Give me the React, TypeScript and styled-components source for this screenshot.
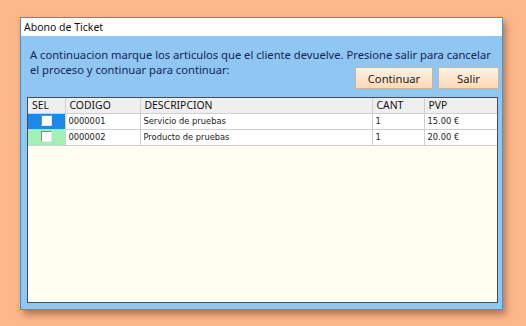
import React from "react";
import styled, { createGlobalStyle } from "styled-components";

const Global = createGlobalStyle`
  html, body { margin: 0; padding: 0; }
  body {
    background: #fdb88a;
    width: 526px;
    height: 326px;
    overflow: hidden;
    font-family: "Noto Sans", "DejaVu Sans", sans-serif;
  }
`;

const Stage = styled.div`
  padding: 17px 0 0 20px;
`;

const Window = styled.div`
  width: 481px;
  height: 291px;
  border: 1px solid #2f9be0;
  background: #90c6f2;
  box-shadow: 3px 5px 7px rgba(120, 70, 40, 0.55);
  display: flex;
  flex-direction: column;
`;

const TitleBar = styled.div`
  height: 18px;
  background: #ffffff;
  display: flex;
  align-items: center;
  padding-left: 3px;
  font-size: 10.5px;
  color: #111;
  flex: none;
`;

const Body = styled.div`
  flex: 1;
  display: flex;
  flex-direction: column;
  padding: 11px 3px 6px 5px;
  min-height: 0;
`;

const Line = styled.div`
  margin-left: 4px;
  font-size: 11.2px;
  line-height: 15px;
  color: #122456;
  white-space: nowrap;
`;

const SecondRow = styled.div`
  display: flex;
  justify-content: space-between;
  align-items: flex-start;
  margin-bottom: 8px;
`;

const Buttons = styled.div`
  display: flex;
  gap: 5px;
  margin-top: 5px;
`;

const Button = styled.button<{ $w: number }>`
  width: ${(p) => p.$w}px;
  height: 22px;
  border: 1px solid #c9b39c;
  background: linear-gradient(#fff2e4, #fcd9b6);
  font-family: "Noto Sans", "DejaVu Sans", sans-serif;
  font-size: 11.2px;
  color: #1b1b1b;
  padding: 0;
`;

const Grid = styled.div`
  flex: 1;
  border: 1px solid #4a4a55;
  background: #fffff1;
  margin: 0 0 0 1px;
  width: 469px;
`;

const Table = styled.table`
  border-collapse: collapse;
  width: 100%;
  table-layout: fixed;
`;

const Th = styled.th<{ $w?: number }>`
  box-sizing: border-box;
  width: ${(p) => (p.$w ? `${p.$w}px` : "auto")};
  height: 15px;
  background: #efefef;
  border-right: 1px solid #cfcfcf;
  border-bottom: 1px solid #cfcfcf;
  font-weight: normal;
  font-size: 10.4px;
  text-align: left;
  padding: 0 0 0 4px;
  color: #111;
  line-height: 14px;
  &:last-child { border-right: none; }
`;

const Td = styled.td<{ $bg?: string }>`
  box-sizing: border-box;
  height: 16px;
  background: ${(p) => p.$bg || "#ffffff"};
  border-right: 1px solid #cfcfcf;
  border-bottom: 1px solid #cfcfcf;
  font-family: "DejaVu Sans", sans-serif;
  font-size: 8.3px;
  color: #222;
  padding: 0 0 0 3px;
  line-height: 15px;
  white-space: nowrap;
  &:last-child { border-right: none; }
`;

const SelCell = styled(Td)`
  padding: 0;
  text-align: center;
`;

const Check = styled.span`
  display: inline-block;
  width: 9px;
  height: 9px;
  background: #fff;
  border: 1px solid #8a8a8a;
  border-right-color: #e8e8e8;
  border-bottom-color: #e8e8e8;
  vertical-align: middle;
  margin-top: -2px;
`;

const rows = [
  { sel: "#1c88e8", code: "0000001", desc: "Servicio de pruebas", cant: "1", pvp: "15.00 €" },
  { sel: "#a4efb4", code: "0000002", desc: "Producto de pruebas", cant: "1", pvp: "20.00 €" },
];

export default function App() {
  return (
    <>
      <Global />
      <Stage>
        <Window>
          <TitleBar>Abono de Ticket</TitleBar>
          <Body>
            <Line>
              A continuacion marque los articulos que el cliente devuelve. Presione salir para cancelar
            </Line>
            <SecondRow>
              <Line>el proceso y continuar para continuar:</Line>
              <Buttons>
                <Button $w={78}>Continuar</Button>
                <Button $w={61}>Salir</Button>
              </Buttons>
            </SecondRow>
            <Grid>
              <Table>
                <thead>
                  <tr>
                    <Th $w={37}>SEL</Th>
                    <Th $w={75}>CODIGO</Th>
                    <Th $w={232}>DESCRIPCION</Th>
                    <Th $w={52}>CANT</Th>
                    <Th>PVP</Th>
                  </tr>
                </thead>
                <tbody>
                  {rows.map((r) => (
                    <tr key={r.code}>
                      <SelCell $bg={r.sel}>
                        <Check />
                      </SelCell>
                      <Td>{r.code}</Td>
                      <Td>{r.desc}</Td>
                      <Td>{r.cant}</Td>
                      <Td>{r.pvp}</Td>
                    </tr>
                  ))}
                </tbody>
              </Table>
            </Grid>
          </Body>
        </Window>
      </Stage>
    </>
  );
}
